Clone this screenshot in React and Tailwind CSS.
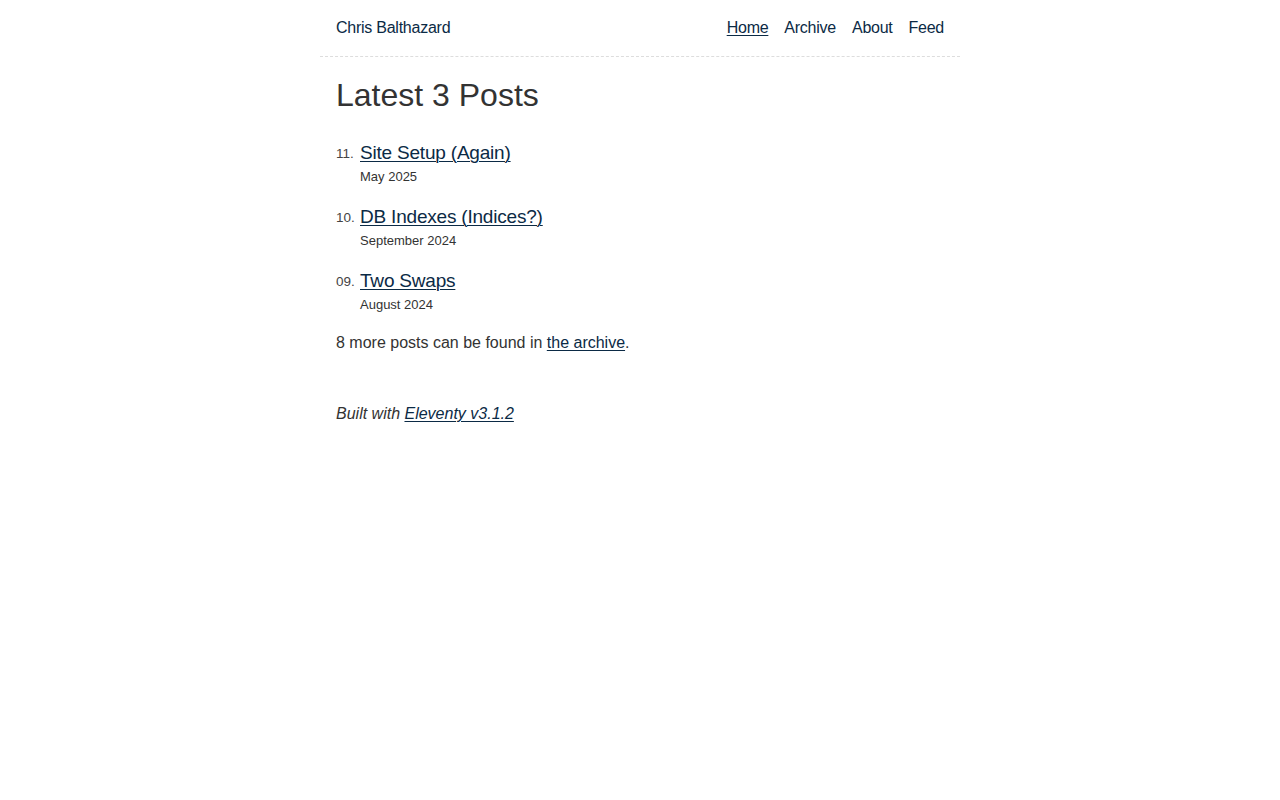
const posts = [
    { num: '11.', title: 'Site Setup (Again)', date: 'May 2025' },
    { num: '10.', title: 'DB Indexes (Indices?)', date: 'September 2024' },
    { num: '09.', title: 'Two Swaps', date: 'August 2024' },
];

const linkCls = 'text-[#0b2a45] underline underline-offset-2 decoration-1';

export default function App() {
    return (
        <div className="min-h-screen bg-white text-[#333] font-['Liberation_Sans',Arial,sans-serif]">
            <div className="mx-auto w-[640px]">
                {/* Header */}
                <header className="h-[57px] px-4 flex items-center justify-between border-b border-dashed border-[#dddddd] tracking-[-0.25px]">
                    <a className="text-base text-[#0b2a45]">Chris Balthazard</a>
                    <nav className="flex gap-4 text-base text-[#0b2a45]">
                        <a className="underline underline-offset-2">Home</a>
                        <a>Archive</a>
                        <a>About</a>
                        <a>Feed</a>
                    </nav>
                </header>

                <main className="px-4">
                    <h1 className="mt-[18px] text-[32px] leading-10 font-normal">Latest 3 Posts</h1>

                    <ol className="mt-6 flex flex-col gap-4">
                        {posts.map((p) => (
                            <li key={p.num} className="flex">
                                <span className="w-6 shrink-0 text-[13.5px] leading-7 pt-[1px] text-[#444]">{p.num}</span>
                                <div className="flex flex-col">
                                    <a className={`text-[19px] leading-7 tracking-[-0.2px] ${linkCls}`}>{p.title}</a>
                                    <span className="text-[13px] leading-5">{p.date}</span>
                                </div>
                            </li>
                        ))}
                    </ol>

                    <p className="mt-4 text-base leading-6">
                        8 more posts can be found in <a className={linkCls}>the archive</a>.
                    </p>

                    <footer className="mt-[47px] text-base leading-6 italic">
                        Built with <a className={linkCls}>Eleventy v3.1.2</a>
                    </footer>
                </main>
            </div>
        </div>
    );
}
